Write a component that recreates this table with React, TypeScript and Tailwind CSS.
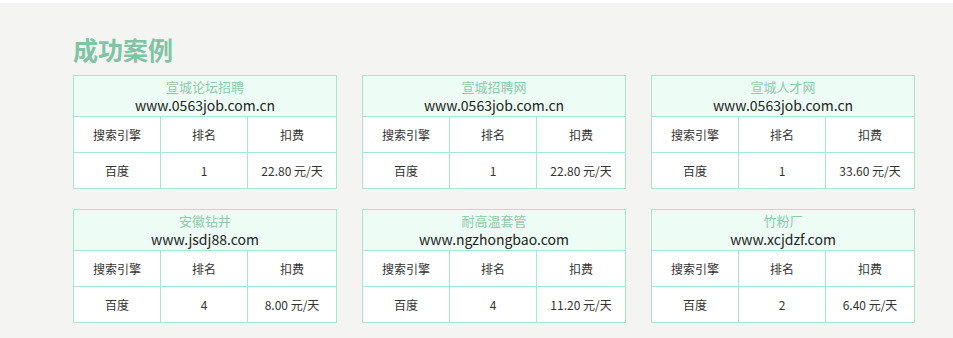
import React from "react";

const cases = [
  { name: "宣城论坛招聘", site: "www.0563job.com.cn", engine: "百度", rank: "1", fee: "22.80 元/天" },
  { name: "宣城招聘网", site: "www.0563job.com.cn", engine: "百度", rank: "1", fee: "22.80 元/天" },
  { name: "宣城人才网", site: "www.0563job.com.cn", engine: "百度", rank: "1", fee: "33.60 元/天" },
  { name: "安徽钻井", site: "www.jsdj88.com", engine: "百度", rank: "4", fee: "8.00 元/天" },
  { name: "耐高温套管", site: "www.ngzhongbao.com", engine: "百度", rank: "4", fee: "11.20 元/天" },
  { name: "竹粉厂", site: "www.xcjdzf.com", engine: "百度", rank: "2", fee: "6.40 元/天" },
];

const font = "font-['Microsoft_YaHei','Noto_Sans_CJK_SC',sans-serif]";

function cn(...c: string[]) {
  return c.join(" ");
}

function CaseCard({ item }: { item: (typeof cases)[number] }) {
  const cell = "flex h-[35px] items-center justify-center text-[12px] text-[#333]";
  return (
    <div className="w-[264px] border border-[#a6e8cf] bg-white">
      <div className="flex h-[41px] flex-col items-center justify-center border-b border-[#a6e8cf] bg-[#edfdf6]">
        <div className="text-[13px] leading-[18px] text-[#8fcbaa]">{item.name}</div>
        <div className="text-[14px] leading-[19px] text-[#222]">{item.site}</div>
      </div>
      <div className="grid grid-cols-[87px_87px_1fr] border-b border-[#a6e8cf]">
        <div className={cn(cell, "border-r border-[#a6e8cf]")}>搜索引擎</div>
        <div className={cn(cell, "border-r border-[#a6e8cf]")}>排名</div>
        <div className={cell}>扣费</div>
      </div>
      <div className="grid grid-cols-[87px_87px_1fr]">
        <div className={cn(cell, "border-r border-[#a6e8cf]")}>{item.engine}</div>
        <div className={cn(cell, "border-r border-[#a6e8cf]")}>{item.rank}</div>
        <div className={cell}>{item.fee}</div>
      </div>
    </div>
  );
}

export default function App() {
  return (
    <div className={cn("h-[338px] w-[953px] bg-white pt-[3px]", font)}>
      <div className="h-[335px] bg-[#f4f4f2] pl-[73px] pt-[30px]">
        <h2 className="text-[25px] font-bold leading-[32px] text-[#7fc4a3]">成功案例</h2>
        <div className="mt-[10px] grid grid-cols-[264px_264px_264px] gap-x-[25px] gap-y-[20px]">
          {cases.map((item, i) => (
            <CaseCard key={i} item={item} />
          ))}
        </div>
      </div>
    </div>
  );
}
